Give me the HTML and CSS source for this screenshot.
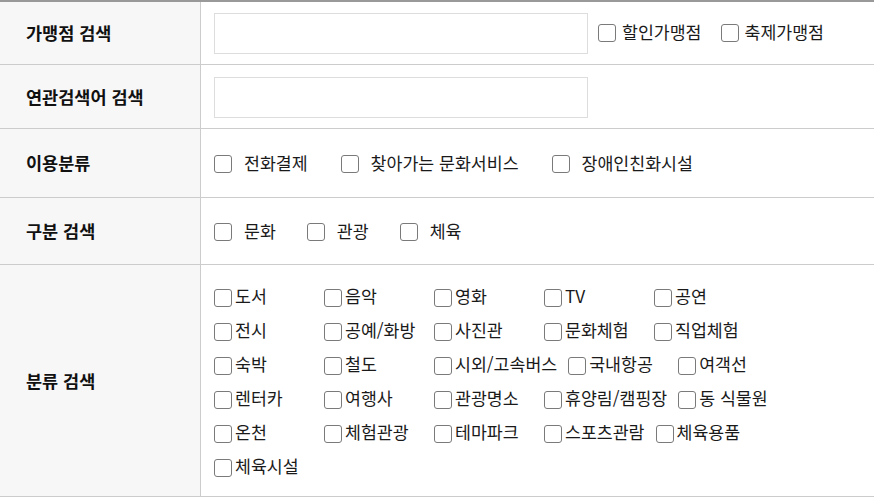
FILE: index.html
```html
<!DOCTYPE html>
<html lang="ko">
<head>
  <meta charset="UTF-8">
  <title>가맹점 검색</title>
  <link rel="stylesheet" href="styles.css">
</head>
<body>

<div class="search-box">
  <div class="row row-store">
    <div class="label">가맹점 검색</div>
    <div class="cell">
      <input type="text" class="text-input">
      <label class="check check-top"><input type="checkbox"><span>할인가맹점</span></label>
      <label class="check check-top"><input type="checkbox"><span>축제가맹점</span></label>
    </div>
  </div>

  <div class="row row-keyword">
    <div class="label">연관검색어 검색</div>
    <div class="cell">
      <input type="text" class="text-input">
    </div>
  </div>

  <div class="row row-use">
    <div class="label">이용분류</div>
    <div class="cell">
      <label class="check check-wide"><input type="checkbox"><span>전화결제</span></label>
      <label class="check check-wide"><input type="checkbox"><span>찾아가는 문화서비스</span></label>
      <label class="check check-wide"><input type="checkbox"><span>장애인친화시설</span></label>
    </div>
  </div>

  <div class="row row-type">
    <div class="label">구분 검색</div>
    <div class="cell">
      <label class="check check-wide narrow"><input type="checkbox"><span>문화</span></label>
      <label class="check check-wide narrow"><input type="checkbox"><span>관광</span></label>
      <label class="check check-wide narrow"><input type="checkbox"><span>체육</span></label>
    </div>
  </div>

  <div class="row row-category">
    <div class="label">분류 검색</div>
    <div class="cell">
      <div class="category-list" id="categoryList"></div>
    </div>
  </div>
</div>

<script>
const categories = [
  "도서", "음악", "영화", "TV", "공연",
  "전시", "공예/화방", "사진관", "문화체험", "직업체험",
  "숙박", "철도", "시외/고속버스", "국내항공", "여객선",
  "렌터카", "여행사", "관광명소", "휴양림/캠핑장", "동 식물원",
  "온천", "체험관광", "테마파크", "스포츠관람", "체육용품",
  "체육시설"
];

let html = "";
categories.forEach(name => {
  html += `<label class="check check-item"><input type="checkbox"><span>${name}</span></label>`;
});
document.getElementById("categoryList").innerHTML = html;
</script>

</body>
</html>
```

FILE: styles.css
```css
body {
  margin: 0;
  font-family: "Noto Sans CJK KR", "Noto Sans", sans-serif;
  font-size: 17.3px;
  color: #1a1a1a;
  background: #fff;
}

.search-box {
  width: 874px;
  border-top: 2px solid #999;
}

.row {
  display: flex;
  border-bottom: 1px solid #ccc;
}

.row-store { height: 62px; }
.row-keyword { height: 63px; }
.row-use { height: 68px; }
.row-type { height: 66px; }
.row-category { height: 231px; }

.label {
  width: 174px;
  flex: none;
  padding-left: 26px;
  background: #f7f7f7;
  border-right: 1px solid #ccc;
  display: flex;
  align-items: center;
  font-weight: bold;
  font-size: 17.5px;
  color: #111;
  line-height: 20px;
}

.cell {
  flex: 1;
  padding-left: 13px;
  display: flex;
  align-items: center;
}

.text-input {
  box-sizing: border-box;
  width: 374px;
  height: 41px;
  margin: 1px 0 0 0;
  border: 1px solid #ddd;
  background: #fff;
  padding: 0 10px;
  font-family: inherit;
  font-size: 16px;
}

.check {
  display: flex;
  align-items: center;
  line-height: 20px;
  white-space: nowrap;
  cursor: pointer;
}

.check input {
  appearance: none;
  -webkit-appearance: none;
  box-sizing: border-box;
  width: 18px;
  height: 18px;
  margin: 0;
  border: 1px solid #7a7a7a;
  border-radius: 3px;
  background: #fff;
  flex: none;
}

.check-top {
  margin-top: -2px;
  margin-left: 10px;
}

.check-top + .check-top {
  margin-left: 19px;
}

.check-top input {
  margin: 2px 6px 0 0;
}

.check-wide {
  margin-right: 33px;
}

.check-wide.narrow {
  margin-right: 31px;
}

.check-wide input {
  margin: 2px 12px 0 0;
}

.row-category .cell {
  align-items: flex-start;
  padding-top: 14px;
}

.category-list {
  display: flex;
  flex-wrap: wrap;
  width: 600px;
}

.check-item {
  min-width: 99px;
  margin-right: 11px;
  height: 34px;
}

.check-item input {
  margin: 3px 3px 0 0;
}
```
